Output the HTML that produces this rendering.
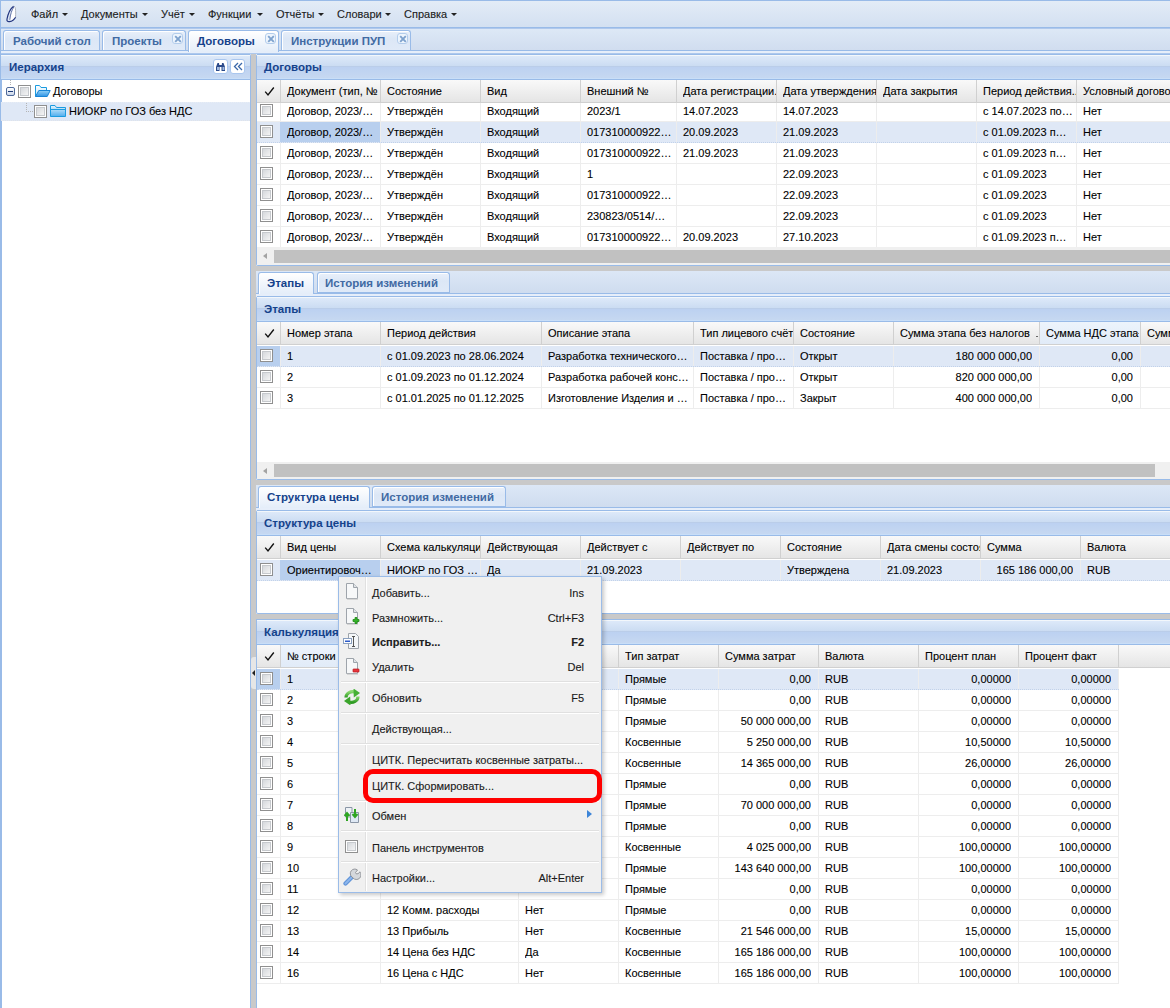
<!DOCTYPE html><html><head><meta charset="utf-8"><style>
*{margin:0;padding:0;box-sizing:border-box}
html,body{width:1170px;height:1008px;overflow:hidden;background:#fff}
body{position:relative;font-family:"Liberation Sans", sans-serif;font-size:11px;color:#000}
.t{position:absolute;white-space:nowrap;line-height:13px}
.ph{position:absolute;background:linear-gradient(to bottom,#f3f7fb 0px,#f3f7fb 1px,#dde9f9 1px,#cbdcf2 11px,#bacde9 11px,#bacde9 12px,#bcd1f1 12px,#c6d8f1 23px,#c8def8 23px,#c8def8 24px);border-bottom:1px solid #99bbe8;border-top:1px solid #99bbe8}
.pht{position:absolute;font-weight:bold;color:#15428b;font-size:11.5px;line-height:13px}
.gh{position:absolute;background:linear-gradient(to bottom,#f9f9f9,#e5e5e5);border-bottom:1px solid #d0d0d0;height:23px}
.hc{position:absolute;top:0;height:22px;border-right:1px solid #d0d0d0}
.hct{position:absolute;top:5px;left:6px;right:0;line-height:13px;white-space:nowrap;overflow:hidden}
.row{position:absolute;height:21px;border-bottom:1px solid #ededed;background:#fff}
.sel{background:#dfe8f6;border-bottom:1px dotted #c2d2ea}
.cell{position:absolute;top:0;height:20px;border-right:1px solid #ededed}
.ct{position:absolute;top:4px;left:7px;right:1px;line-height:13px;white-space:nowrap;overflow:hidden}
.r{text-align:right;right:7px}
.cb{position:absolute;left:3px;top:3px;width:13px;height:13px;border:1px solid #8f8f8f;background:#fff}
.cb::after{content:"";box-sizing:border-box;position:absolute;left:1px;top:1px;width:9px;height:9px;border:1px solid #c6c9cd;background:linear-gradient(135deg,#d5d8dc,#f4f4f4)}
.tab{position:absolute;border:1px solid #99bbe8;border-bottom:none;border-radius:3px 3px 0 0;background:linear-gradient(to bottom,#e9f0fa,#dce7f6 40%,#e0eaf8);box-shadow:inset 1px 1px 0 #fff}
.tabt{position:absolute;font-weight:bold;font-size:11.5px;line-height:13px;color:#416aa3;white-space:nowrap}
.act .tabt{color:#15428b}
.act{background:linear-gradient(to bottom,#ffffff,#e4edf9)}
.tclose{position:absolute;width:11px;height:11px;border:1px solid #b3cdec;border-radius:3px;background:#eef5fd}
.mi{position:absolute;left:0;width:263px;height:25px}
.mt{position:absolute;left:34px;top:6px;line-height:13px;color:#222;white-space:nowrap}
.ct,.hct,.t{-webkit-text-stroke:0.2px rgba(0,0,0,0.5)}
.ms{position:absolute;right:18px;top:6px;line-height:13px;color:#222;white-space:nowrap}
</style></head><body>
<div style="position:absolute;left:0px;top:0px;width:1170px;height:28px;background:linear-gradient(to bottom,#e3ecf7,#d3e0f1);border-top:1px solid #99bbe8;border-bottom:1px solid #99bbe8"></div>
<div style="position:absolute;left:0px;top:28px;width:1170px;height:1px;background:#afc8ec"></div>
<div class="t" style="left:31px;top:8px;color:#1f1f1f">Файл</div>
<div class="t" style="left:81px;top:8px;color:#1f1f1f">Документы</div>
<div class="t" style="left:161px;top:8px;color:#1f1f1f">Учёт</div>
<div class="t" style="left:208px;top:8px;color:#1f1f1f">Функции</div>
<div class="t" style="left:276px;top:8px;color:#1f1f1f">Отчёты</div>
<div class="t" style="left:337px;top:8px;color:#1f1f1f">Словари</div>
<div class="t" style="left:404px;top:8px;color:#1f1f1f">Справка</div>
<div style="position:absolute;left:62px;top:13px;width:0;height:0;border-left:3px solid transparent;border-right:3px solid transparent;border-top:3px solid #222"></div>
<div style="position:absolute;left:142px;top:13px;width:0;height:0;border-left:3px solid transparent;border-right:3px solid transparent;border-top:3px solid #222"></div>
<div style="position:absolute;left:189px;top:13px;width:0;height:0;border-left:3px solid transparent;border-right:3px solid transparent;border-top:3px solid #222"></div>
<div style="position:absolute;left:257px;top:13px;width:0;height:0;border-left:3px solid transparent;border-right:3px solid transparent;border-top:3px solid #222"></div>
<div style="position:absolute;left:318px;top:13px;width:0;height:0;border-left:3px solid transparent;border-right:3px solid transparent;border-top:3px solid #222"></div>
<div style="position:absolute;left:385px;top:13px;width:0;height:0;border-left:3px solid transparent;border-right:3px solid transparent;border-top:3px solid #222"></div>
<div style="position:absolute;left:451px;top:13px;width:0;height:0;border-left:3px solid transparent;border-right:3px solid transparent;border-top:3px solid #222"></div>
<svg style="position:absolute;left:0px;top:2px" width="24" height="24" viewBox="0 0 24 24"><path d="M14 4 L15.6 5 L15.6 15 L12 18.5 L9.6 17.8 L10.4 11 Z" fill="#fff"/><path d="M14 4.2 C15.5 4.8 15.8 7 15.6 15.2" fill="none" stroke="#a6abb8" stroke-width="0.9"/><path d="M13.6 4.2 C10.5 6.5 8 12 7 17 C6.6 19 7.5 19.8 9.5 19.6 C12 19.3 14.2 17.8 15.6 15.2" fill="none" stroke="#23357f" stroke-width="1.2"/><path d="M14 4.6 C12 7.5 10.2 12.5 9.8 17.8" fill="none" stroke="#5b6ea6" stroke-width="1"/></svg>
<div style="position:absolute;left:0px;top:29px;width:1170px;height:25px;background:linear-gradient(to bottom,#dde8f6,#cedbee)"></div>
<div style="position:absolute;left:0px;top:50px;width:1170px;height:1px;background:#99bbe8"></div>
<div style="position:absolute;left:0px;top:51px;width:1170px;height:3px;background:#e6eefa"></div>
<div style="position:absolute;left:0px;top:53px;width:1170px;height:1px;background:#adc8ed"></div>
<div class="tab" style="left:3px;top:30px;width:97px;height:20px"></div>
<div class="tabt" style="left:13px;top:35px;">Рабочий стол</div>
<div class="tab" style="left:102px;top:30px;width:84px;height:20px"></div>
<div class="tabt" style="left:112px;top:35px;">Проекты</div>
<div class="tclose" style="left:172px;top:33px"></div>
<svg style="position:absolute;left:174px;top:35px" width="8" height="8" viewBox="0 0 8 8"><path d="M1.2 1.2 L6.8 6.8 M6.8 1.2 L1.2 6.8" stroke="#7ea2cd" stroke-width="1.9"/></svg>
<div class="tab act" style="left:188px;top:30px;width:91px;height:22px"></div>
<div class="tabt" style="left:197px;top:35px;color:#15428b">Договоры</div>
<div class="tclose" style="left:265px;top:33px"></div>
<svg style="position:absolute;left:267px;top:35px" width="8" height="8" viewBox="0 0 8 8"><path d="M1.2 1.2 L6.8 6.8 M6.8 1.2 L1.2 6.8" stroke="#7ea2cd" stroke-width="1.9"/></svg>
<div class="tab" style="left:281px;top:30px;width:130px;height:20px"></div>
<div class="tabt" style="left:291px;top:35px;">Инструкции ПУП</div>
<div class="tclose" style="left:397px;top:33px"></div>
<svg style="position:absolute;left:399px;top:35px" width="8" height="8" viewBox="0 0 8 8"><path d="M1.2 1.2 L6.8 6.8 M6.8 1.2 L1.2 6.8" stroke="#7ea2cd" stroke-width="1.9"/></svg>
<div style="position:absolute;left:0px;top:0px;width:1px;height:1008px;background:#99bbe8"></div>
<div style="position:absolute;left:1px;top:54px;width:250px;height:954px;background:#fff;border-left:1px solid #99bbe8;border-right:1px solid #99bbe8;border-top:1px solid #99bbe8;border-radius:2px 2px 0 0"></div>
<div class="ph" style="left:1px;top:54px;width:249px;height:26px"></div>
<div class="pht" style="left:9px;top:61px">Иерархия</div>
<div style="position:absolute;left:213px;top:59px;width:15px;height:15px;background:#fff;border:1px solid #a9c6ee;border-radius:3px"></div>
<div style="position:absolute;left:230px;top:59px;width:15px;height:15px;background:#fff;border:1px solid #a9c6ee;border-radius:3px"></div>
<svg style="position:absolute;left:215px;top:62px" width="11" height="10" viewBox="0 0 11 10"><path d="M1 9 L1 5 L2.5 1 L4 1 L4.5 5 L4.5 9 Z M6.5 9 L6.5 5 L7 1 L8.5 1 L10 5 L10 9 Z" fill="#2b4a8a"/><rect x="2" y="5" width="2" height="3" fill="#9fb9e0"/><rect x="7.5" y="5" width="2" height="3" fill="#9fb9e0"/><rect x="4" y="3" width="3" height="2" fill="#2b4a8a"/></svg>
<svg style="position:absolute;left:233px;top:62px" width="10" height="9" viewBox="0 0 10 9"><path d="M5 1 L1.5 4.5 L5 8 M9 1 L5.5 4.5 L9 8" fill="none" stroke="#3a67a8" stroke-width="1.3"/></svg>
<div style="position:absolute;left:10px;top:80px;width:1px;height:5px;border-left:1px dotted #b4b4b4"></div>
<div style="position:absolute;left:6px;top:87px;width:9px;height:9px;border:1px solid #4f6a9a;border-radius:2px;background:linear-gradient(#ffffff,#c9d6ea)"></div>
<div style="position:absolute;left:8px;top:91px;width:5px;height:1px;background:#1c3a78"></div>
<div class="cb" style="left:18px;top:85px"></div>
<svg style="position:absolute;left:34px;top:84px" width="17" height="14" viewBox="0 0 17 14"><defs><linearGradient id="fo1" x1="0" y1="0" x2="0" y2="1"><stop offset="0" stop-color="#ffffff"/><stop offset="1" stop-color="#bfe3fa"/></linearGradient><linearGradient id="fo2" x1="0" y1="0" x2="0" y2="1"><stop offset="0" stop-color="#8fd0f7"/><stop offset="1" stop-color="#2f93e4"/></linearGradient></defs><path d="M1.5 12.5 L1.5 1.5 L5.5 1.5 L7 3.5 L12.5 3.5 L12.5 6.5" fill="url(#fo1)" stroke="#1a9be0" stroke-width="1"/><path d="M1.5 12.5 L4.8 6.5 L16.2 6.5 L13.2 12.5 Z" fill="url(#fo2)" stroke="#1784d6" stroke-width="1" stroke-linejoin="round"/></svg>
<div class="t" style="left:53px;top:85px;">Договоры</div>
<div style="position:absolute;left:1px;top:102px;width:249px;height:19px;background:#dfe8f6;border-top:1px dotted #e6ecf5;border-bottom:1px dotted #dfe3ea"></div>
<div style="position:absolute;left:26px;top:103px;width:1px;height:9px;border-left:1px dotted #b4b4b4"></div>
<div style="position:absolute;left:26px;top:111px;width:7px;height:1px;border-top:1px dotted #b4b4b4"></div>
<div class="cb" style="left:34px;top:105px"></div>
<svg style="position:absolute;left:50px;top:104px" width="16" height="14" viewBox="0 0 16 14"><defs><linearGradient id="fc1" x1="0" y1="0" x2="0" y2="1"><stop offset="0" stop-color="#e6f5fd"/><stop offset="1" stop-color="#4fadee"/></linearGradient></defs><path d="M0.5 12.5 L0.5 1.5 L5 1.5 L6.5 3.5 L15.5 3.5 L15.5 12.5 Z" fill="url(#fc1)" stroke="#1a9be0" stroke-width="1" stroke-linejoin="round"/><path d="M1 5.5 L15 5.5" stroke="#1a9be0" stroke-width="1"/></svg>
<div class="t" style="left:69px;top:105px;">НИОКР по ГОЗ без НДС</div>
<div style="position:absolute;left:251px;top:54px;width:5px;height:954px;background:#c9c9c9"></div>
<div style="position:absolute;left:256px;top:54px;width:914px;height:212px;background:#fff;border-left:1px solid #99bbe8;border-bottom:1px solid #99bbe8;border-radius:2px 0 0 2px"></div>
<div style="position:absolute;left:256px;top:296px;width:914px;height:184px;background:#fff;border-left:1px solid #99bbe8;border-bottom:1px solid #99bbe8;border-radius:2px 0 0 2px"></div>
<div style="position:absolute;left:256px;top:510px;width:914px;height:104px;background:#fff;border-left:1px solid #99bbe8;border-bottom:1px solid #99bbe8;border-radius:2px 0 0 2px"></div>
<div style="position:absolute;left:256px;top:619px;width:914px;height:389px;background:#fff;border-left:1px solid #99bbe8"></div>
<div class="ph" style="left:257px;top:54px;width:913px;height:26px"></div>
<div class="pht" style="left:264px;top:61px">Договоры</div>
<div class="row" style="left:257px;top:101px;width:913px">
<div class="cell" style="left:0;width:24px;"><div class="cb"></div></div>
<div class="cell" style="left:23px;width:101px;"><div class="ct">Договор, 2023/…</div></div>
<div class="cell" style="left:123px;width:101px;"><div class="ct">Утверждён</div></div>
<div class="cell" style="left:223px;width:101px;"><div class="ct">Входящий</div></div>
<div class="cell" style="left:323px;width:97px;"><div class="ct">2023/1</div></div>
<div class="cell" style="left:419px;width:101px;"><div class="ct">14.07.2023</div></div>
<div class="cell" style="left:519px;width:101px;"><div class="ct">14.07.2023</div></div>
<div class="cell" style="left:619px;width:101px;"><div class="ct"></div></div>
<div class="cell" style="left:719px;width:101px;"><div class="ct">с 14.07.2023 по…</div></div>
<div class="cell" style="left:819px;width:101px;"><div class="ct">Нет</div></div>
</div>
<div class="row sel" style="left:257px;top:122px;width:913px">
<div class="cell" style="left:0;width:24px;"><div class="cb"></div></div>
<div class="cell" style="left:23px;width:101px;background:#b8cfee;"><div class="ct">Договор, 2023/…</div></div>
<div class="cell" style="left:123px;width:101px;"><div class="ct">Утверждён</div></div>
<div class="cell" style="left:223px;width:101px;"><div class="ct">Входящий</div></div>
<div class="cell" style="left:323px;width:97px;"><div class="ct">017310000922…</div></div>
<div class="cell" style="left:419px;width:101px;"><div class="ct">20.09.2023</div></div>
<div class="cell" style="left:519px;width:101px;"><div class="ct">21.09.2023</div></div>
<div class="cell" style="left:619px;width:101px;"><div class="ct"></div></div>
<div class="cell" style="left:719px;width:101px;"><div class="ct">с 01.09.2023 п…</div></div>
<div class="cell" style="left:819px;width:101px;"><div class="ct">Нет</div></div>
</div>
<div class="row" style="left:257px;top:143px;width:913px">
<div class="cell" style="left:0;width:24px;"><div class="cb"></div></div>
<div class="cell" style="left:23px;width:101px;"><div class="ct">Договор, 2023/…</div></div>
<div class="cell" style="left:123px;width:101px;"><div class="ct">Утверждён</div></div>
<div class="cell" style="left:223px;width:101px;"><div class="ct">Входящий</div></div>
<div class="cell" style="left:323px;width:97px;"><div class="ct">017310000922…</div></div>
<div class="cell" style="left:419px;width:101px;"><div class="ct">21.09.2023</div></div>
<div class="cell" style="left:519px;width:101px;"><div class="ct">21.09.2023</div></div>
<div class="cell" style="left:619px;width:101px;"><div class="ct"></div></div>
<div class="cell" style="left:719px;width:101px;"><div class="ct">с 01.09.2023 п…</div></div>
<div class="cell" style="left:819px;width:101px;"><div class="ct">Нет</div></div>
</div>
<div class="row" style="left:257px;top:164px;width:913px">
<div class="cell" style="left:0;width:24px;"><div class="cb"></div></div>
<div class="cell" style="left:23px;width:101px;"><div class="ct">Договор, 2023/…</div></div>
<div class="cell" style="left:123px;width:101px;"><div class="ct">Утверждён</div></div>
<div class="cell" style="left:223px;width:101px;"><div class="ct">Входящий</div></div>
<div class="cell" style="left:323px;width:97px;"><div class="ct">1</div></div>
<div class="cell" style="left:419px;width:101px;"><div class="ct"></div></div>
<div class="cell" style="left:519px;width:101px;"><div class="ct">22.09.2023</div></div>
<div class="cell" style="left:619px;width:101px;"><div class="ct"></div></div>
<div class="cell" style="left:719px;width:101px;"><div class="ct">с 01.09.2023</div></div>
<div class="cell" style="left:819px;width:101px;"><div class="ct">Нет</div></div>
</div>
<div class="row" style="left:257px;top:185px;width:913px">
<div class="cell" style="left:0;width:24px;"><div class="cb"></div></div>
<div class="cell" style="left:23px;width:101px;"><div class="ct">Договор, 2023/…</div></div>
<div class="cell" style="left:123px;width:101px;"><div class="ct">Утверждён</div></div>
<div class="cell" style="left:223px;width:101px;"><div class="ct">Входящий</div></div>
<div class="cell" style="left:323px;width:97px;"><div class="ct">017310000922…</div></div>
<div class="cell" style="left:419px;width:101px;"><div class="ct"></div></div>
<div class="cell" style="left:519px;width:101px;"><div class="ct">22.09.2023</div></div>
<div class="cell" style="left:619px;width:101px;"><div class="ct"></div></div>
<div class="cell" style="left:719px;width:101px;"><div class="ct">с 01.09.2023</div></div>
<div class="cell" style="left:819px;width:101px;"><div class="ct">Нет</div></div>
</div>
<div class="row" style="left:257px;top:206px;width:913px">
<div class="cell" style="left:0;width:24px;"><div class="cb"></div></div>
<div class="cell" style="left:23px;width:101px;"><div class="ct">Договор, 2023/…</div></div>
<div class="cell" style="left:123px;width:101px;"><div class="ct">Утверждён</div></div>
<div class="cell" style="left:223px;width:101px;"><div class="ct">Входящий</div></div>
<div class="cell" style="left:323px;width:97px;"><div class="ct">230823/0514/…</div></div>
<div class="cell" style="left:419px;width:101px;"><div class="ct"></div></div>
<div class="cell" style="left:519px;width:101px;"><div class="ct">22.09.2023</div></div>
<div class="cell" style="left:619px;width:101px;"><div class="ct"></div></div>
<div class="cell" style="left:719px;width:101px;"><div class="ct">с 01.09.2023</div></div>
<div class="cell" style="left:819px;width:101px;"><div class="ct">Нет</div></div>
</div>
<div class="row" style="left:257px;top:227px;width:913px">
<div class="cell" style="left:0;width:24px;"><div class="cb"></div></div>
<div class="cell" style="left:23px;width:101px;"><div class="ct">Договор, 2023/…</div></div>
<div class="cell" style="left:123px;width:101px;"><div class="ct">Утверждён</div></div>
<div class="cell" style="left:223px;width:101px;"><div class="ct">Входящий</div></div>
<div class="cell" style="left:323px;width:97px;"><div class="ct">017310000922…</div></div>
<div class="cell" style="left:419px;width:101px;"><div class="ct">20.09.2023</div></div>
<div class="cell" style="left:519px;width:101px;"><div class="ct">27.10.2023</div></div>
<div class="cell" style="left:619px;width:101px;"><div class="ct"></div></div>
<div class="cell" style="left:719px;width:101px;"><div class="ct">с 01.09.2023 п…</div></div>
<div class="cell" style="left:819px;width:101px;"><div class="ct">Нет</div></div>
</div>
<div class="gh" style="left:257px;top:80px;width:913px"></div>
<div class="hc" style="left:257px;top:80px;width:24px"></div>
<svg style="position:absolute;left:264px;top:86px" width="11" height="11" viewBox="0 0 11 11"><path d="M1.2 5.6 L4 9 L9.8 1.5" fill="none" stroke="#111" stroke-width="1.35"/></svg>
<div class="hc" style="left:281px;top:80px;width:100px;"><div class="hct">Документ (тип, №</div></div>
<div class="hc" style="left:381px;top:80px;width:100px;"><div class="hct">Состояние</div></div>
<div class="hc" style="left:481px;top:80px;width:100px;"><div class="hct">Вид</div></div>
<div class="hc" style="left:581px;top:80px;width:96px;"><div class="hct">Внешний №</div></div>
<div class="hc" style="left:677px;top:80px;width:100px;"><div class="hct">Дата регистрации.</div></div>
<div class="hc" style="left:777px;top:80px;width:100px;"><div class="hct">Дата утверждения</div></div>
<div class="hc" style="left:877px;top:80px;width:100px;"><div class="hct">Дата закрытия</div></div>
<div class="hc" style="left:977px;top:80px;width:100px;"><div class="hct">Период действия..</div></div>
<div class="hc" style="left:1077px;top:80px;width:100px;"><div class="hct">Условный договор</div></div>
<div style="position:absolute;left:257px;top:247px;width:913px;height:18px;background:#f0f0f0"></div>
<div style="position:absolute;left:274px;top:250px;width:896px;height:13px;background:#c1c1c1"></div>
<div style="position:absolute;left:263px;top:253px;width:0;height:0;border-top:3.5px solid transparent;border-bottom:3.5px solid transparent;border-right:4px solid #a3a3a3"></div>
<div style="position:absolute;left:256px;top:266px;width:914px;height:5px;background:#c9c9c9"></div>
<div style="position:absolute;left:256px;top:271px;width:914px;height:25px;background:linear-gradient(to bottom,#dce7f6,#cddbee)"></div>
<div style="position:absolute;left:256px;top:293px;width:914px;height:1px;background:#99bbe8"></div>
<div style="position:absolute;left:256px;top:294px;width:914px;height:2px;background:#e6eefa"></div>
<div class="tab act" style="left:258px;top:272px;width:56px;height:22px"></div>
<div class="tabt" style="left:267px;top:277px;color:#15428b">Этапы</div>
<div class="tab" style="left:317px;top:272px;width:133px;height:21px"></div>
<div style="position:absolute;left:317px;top:292px;width:133px;height:1px;background:#99bbe8"></div>
<div class="tabt" style="left:325px;top:277px;">История изменений</div>
<div class="ph" style="left:257px;top:296px;width:913px;height:26px"></div>
<div class="pht" style="left:264px;top:303px">Этапы</div>
<div class="row sel" style="left:257px;top:346px;width:913px">
<div class="cell" style="left:0;width:24px;background:#b8cfee;"><div class="cb"></div></div>
<div class="cell" style="left:23px;width:101px;"><div class="ct">1</div></div>
<div class="cell" style="left:123px;width:162px;"><div class="ct">с 01.09.2023 по 28.06.2024</div></div>
<div class="cell" style="left:284px;width:153px;"><div class="ct">Разработка технического…</div></div>
<div class="cell" style="left:436px;width:101px;"><div class="ct">Поставка / про…</div></div>
<div class="cell" style="left:536px;width:101px;"><div class="ct">Открыт</div></div>
<div class="cell" style="left:636px;width:147px;"><div class="ct r">180 000 000,00</div></div>
<div class="cell" style="left:782px;width:102px;"><div class="ct r">0,00</div></div>
<div class="cell" style="left:883px;width:101px;"><div class="ct"></div></div>
</div>
<div class="row" style="left:257px;top:367px;width:913px">
<div class="cell" style="left:0;width:24px;"><div class="cb"></div></div>
<div class="cell" style="left:23px;width:101px;"><div class="ct">2</div></div>
<div class="cell" style="left:123px;width:162px;"><div class="ct">с 01.09.2023 по 01.12.2024</div></div>
<div class="cell" style="left:284px;width:153px;"><div class="ct">Разработка рабочей конс…</div></div>
<div class="cell" style="left:436px;width:101px;"><div class="ct">Поставка / про…</div></div>
<div class="cell" style="left:536px;width:101px;"><div class="ct">Открыт</div></div>
<div class="cell" style="left:636px;width:147px;"><div class="ct r">820 000 000,00</div></div>
<div class="cell" style="left:782px;width:102px;"><div class="ct r">0,00</div></div>
<div class="cell" style="left:883px;width:101px;"><div class="ct"></div></div>
</div>
<div class="row" style="left:257px;top:388px;width:913px">
<div class="cell" style="left:0;width:24px;"><div class="cb"></div></div>
<div class="cell" style="left:23px;width:101px;"><div class="ct">3</div></div>
<div class="cell" style="left:123px;width:162px;"><div class="ct">с 01.01.2025 по 01.12.2025</div></div>
<div class="cell" style="left:284px;width:153px;"><div class="ct">Изготовление Изделия и …</div></div>
<div class="cell" style="left:436px;width:101px;"><div class="ct">Поставка / про…</div></div>
<div class="cell" style="left:536px;width:101px;"><div class="ct">Закрыт</div></div>
<div class="cell" style="left:636px;width:147px;"><div class="ct r">400 000 000,00</div></div>
<div class="cell" style="left:782px;width:102px;"><div class="ct r">0,00</div></div>
<div class="cell" style="left:883px;width:101px;"><div class="ct"></div></div>
</div>
<div class="gh" style="left:257px;top:322px;width:913px"></div>
<div class="hc" style="left:257px;top:322px;width:24px"></div>
<svg style="position:absolute;left:264px;top:328px" width="11" height="11" viewBox="0 0 11 11"><path d="M1.2 5.6 L4 9 L9.8 1.5" fill="none" stroke="#111" stroke-width="1.35"/></svg>
<div class="hc" style="left:281px;top:322px;width:100px;"><div class="hct">Номер этапа</div></div>
<div class="hc" style="left:381px;top:322px;width:161px;"><div class="hct">Период действия</div></div>
<div class="hc" style="left:542px;top:322px;width:152px;"><div class="hct">Описание этапа</div></div>
<div class="hc" style="left:694px;top:322px;width:100px;"><div class="hct">Тип лицевого счёт</div></div>
<div class="hc" style="left:794px;top:322px;width:100px;"><div class="hct">Состояние</div></div>
<div class="hc" style="left:894px;top:322px;width:146px;"><div class="hct">Сумма этапа без налогов</div></div>
<div class="hc" style="left:1040px;top:322px;width:101px;background:linear-gradient(to bottom,#edf4fc,#e1ebf8);"><div class="hct">Сумма НДС этапа</div></div>
<div class="hc" style="left:1141px;top:322px;width:100px;"><div class="hct">Сумма</div></div>
<div style="position:absolute;left:1036px;top:336px;width:2px;height:1px;background:#666"></div>
<div style="position:absolute;left:1137px;top:333px;width:2px;height:1px;background:#888"></div>
<div style="position:absolute;left:257px;top:462px;width:913px;height:17px;background:#f0f0f0"></div>
<div style="position:absolute;left:274px;top:464px;width:881px;height:13px;background:#c1c1c1"></div>
<div style="position:absolute;left:263px;top:468px;width:0;height:0;border-top:3.5px solid transparent;border-bottom:3.5px solid transparent;border-right:4px solid #a3a3a3"></div>
<div style="position:absolute;left:256px;top:480px;width:914px;height:5px;background:#c9c9c9"></div>
<div style="position:absolute;left:256px;top:485px;width:914px;height:25px;background:linear-gradient(to bottom,#dce7f6,#cddbee)"></div>
<div style="position:absolute;left:256px;top:507px;width:914px;height:1px;background:#99bbe8"></div>
<div style="position:absolute;left:256px;top:508px;width:914px;height:2px;background:#e6eefa"></div>
<div class="tab act" style="left:258px;top:486px;width:112px;height:22px"></div>
<div class="tabt" style="left:267px;top:491px;color:#15428b">Структура цены</div>
<div class="tab" style="left:372px;top:486px;width:134px;height:21px"></div>
<div style="position:absolute;left:372px;top:506px;width:134px;height:1px;background:#99bbe8"></div>
<div class="tabt" style="left:381px;top:491px;">История изменений</div>
<div class="ph" style="left:257px;top:510px;width:913px;height:26px"></div>
<div class="pht" style="left:264px;top:517px">Структура цены</div>
<div class="row sel" style="left:257px;top:560px;width:913px">
<div class="cell" style="left:0;width:24px;"><div class="cb"></div></div>
<div class="cell" style="left:23px;width:101px;background:#b8cfee;"><div class="ct">Ориентировоч…</div></div>
<div class="cell" style="left:123px;width:101px;"><div class="ct">НИОКР по ГОЗ …</div></div>
<div class="cell" style="left:223px;width:101px;"><div class="ct">Да</div></div>
<div class="cell" style="left:323px;width:101px;"><div class="ct">21.09.2023</div></div>
<div class="cell" style="left:423px;width:101px;"><div class="ct"></div></div>
<div class="cell" style="left:523px;width:101px;"><div class="ct">Утверждена</div></div>
<div class="cell" style="left:623px;width:101px;"><div class="ct">21.09.2023</div></div>
<div class="cell" style="left:723px;width:101px;"><div class="ct r">165 186 000,00</div></div>
<div class="cell" style="left:823px;width:101px;"><div class="ct">RUB</div></div>
</div>
<div class="gh" style="left:257px;top:536px;width:913px"></div>
<div class="hc" style="left:257px;top:536px;width:24px"></div>
<svg style="position:absolute;left:264px;top:542px" width="11" height="11" viewBox="0 0 11 11"><path d="M1.2 5.6 L4 9 L9.8 1.5" fill="none" stroke="#111" stroke-width="1.35"/></svg>
<div class="hc" style="left:281px;top:536px;width:100px;"><div class="hct">Вид цены</div></div>
<div class="hc" style="left:381px;top:536px;width:100px;"><div class="hct">Схема калькуляци</div></div>
<div class="hc" style="left:481px;top:536px;width:100px;"><div class="hct">Действующая</div></div>
<div class="hc" style="left:581px;top:536px;width:100px;"><div class="hct">Действует с</div></div>
<div class="hc" style="left:681px;top:536px;width:100px;"><div class="hct">Действует по</div></div>
<div class="hc" style="left:781px;top:536px;width:100px;"><div class="hct">Состояние</div></div>
<div class="hc" style="left:881px;top:536px;width:100px;"><div class="hct">Дата смены состоя</div></div>
<div class="hc" style="left:981px;top:536px;width:100px;"><div class="hct">Сумма</div></div>
<div class="hc" style="left:1081px;top:536px;width:100px;"><div class="hct">Валюта</div></div>
<div style="position:absolute;left:256px;top:614px;width:914px;height:5px;background:#c9c9c9"></div>
<div class="ph" style="left:257px;top:619px;width:913px;height:26px"></div>
<div class="pht" style="left:264px;top:626px">Калькуляция</div>
<div class="row sel" style="left:257px;top:669px;width:862px">
<div class="cell" style="left:0;width:24px;background:#b8cfee;"><div class="cb"></div></div>
<div class="cell" style="left:23px;width:101px;"><div class="ct">1</div></div>
<div class="cell" style="left:123px;width:139px;"><div class="ct"></div></div>
<div class="cell" style="left:261px;width:101px;"><div class="ct"></div></div>
<div class="cell" style="left:361px;width:101px;"><div class="ct">Прямые</div></div>
<div class="cell" style="left:461px;width:101px;"><div class="ct r">0,00</div></div>
<div class="cell" style="left:561px;width:101px;"><div class="ct">RUB</div></div>
<div class="cell" style="left:661px;width:101px;"><div class="ct r">0,00000</div></div>
<div class="cell" style="left:761px;width:101px;"><div class="ct r">0,00000</div></div>
</div>
<div class="row" style="left:257px;top:690px;width:862px">
<div class="cell" style="left:0;width:24px;"><div class="cb"></div></div>
<div class="cell" style="left:23px;width:101px;"><div class="ct">2</div></div>
<div class="cell" style="left:123px;width:139px;"><div class="ct"></div></div>
<div class="cell" style="left:261px;width:101px;"><div class="ct"></div></div>
<div class="cell" style="left:361px;width:101px;"><div class="ct">Прямые</div></div>
<div class="cell" style="left:461px;width:101px;"><div class="ct r">0,00</div></div>
<div class="cell" style="left:561px;width:101px;"><div class="ct">RUB</div></div>
<div class="cell" style="left:661px;width:101px;"><div class="ct r">0,00000</div></div>
<div class="cell" style="left:761px;width:101px;"><div class="ct r">0,00000</div></div>
</div>
<div class="row" style="left:257px;top:711px;width:862px">
<div class="cell" style="left:0;width:24px;"><div class="cb"></div></div>
<div class="cell" style="left:23px;width:101px;"><div class="ct">3</div></div>
<div class="cell" style="left:123px;width:139px;"><div class="ct"></div></div>
<div class="cell" style="left:261px;width:101px;"><div class="ct"></div></div>
<div class="cell" style="left:361px;width:101px;"><div class="ct">Прямые</div></div>
<div class="cell" style="left:461px;width:101px;"><div class="ct r">50 000 000,00</div></div>
<div class="cell" style="left:561px;width:101px;"><div class="ct">RUB</div></div>
<div class="cell" style="left:661px;width:101px;"><div class="ct r">0,00000</div></div>
<div class="cell" style="left:761px;width:101px;"><div class="ct r">0,00000</div></div>
</div>
<div class="row" style="left:257px;top:732px;width:862px">
<div class="cell" style="left:0;width:24px;"><div class="cb"></div></div>
<div class="cell" style="left:23px;width:101px;"><div class="ct">4</div></div>
<div class="cell" style="left:123px;width:139px;"><div class="ct"></div></div>
<div class="cell" style="left:261px;width:101px;"><div class="ct"></div></div>
<div class="cell" style="left:361px;width:101px;"><div class="ct">Косвенные</div></div>
<div class="cell" style="left:461px;width:101px;"><div class="ct r">5 250 000,00</div></div>
<div class="cell" style="left:561px;width:101px;"><div class="ct">RUB</div></div>
<div class="cell" style="left:661px;width:101px;"><div class="ct r">10,50000</div></div>
<div class="cell" style="left:761px;width:101px;"><div class="ct r">10,50000</div></div>
</div>
<div class="row" style="left:257px;top:753px;width:862px">
<div class="cell" style="left:0;width:24px;"><div class="cb"></div></div>
<div class="cell" style="left:23px;width:101px;"><div class="ct">5</div></div>
<div class="cell" style="left:123px;width:139px;"><div class="ct"></div></div>
<div class="cell" style="left:261px;width:101px;"><div class="ct"></div></div>
<div class="cell" style="left:361px;width:101px;"><div class="ct">Косвенные</div></div>
<div class="cell" style="left:461px;width:101px;"><div class="ct r">14 365 000,00</div></div>
<div class="cell" style="left:561px;width:101px;"><div class="ct">RUB</div></div>
<div class="cell" style="left:661px;width:101px;"><div class="ct r">26,00000</div></div>
<div class="cell" style="left:761px;width:101px;"><div class="ct r">26,00000</div></div>
</div>
<div class="row" style="left:257px;top:774px;width:862px">
<div class="cell" style="left:0;width:24px;"><div class="cb"></div></div>
<div class="cell" style="left:23px;width:101px;"><div class="ct">6</div></div>
<div class="cell" style="left:123px;width:139px;"><div class="ct"></div></div>
<div class="cell" style="left:261px;width:101px;"><div class="ct"></div></div>
<div class="cell" style="left:361px;width:101px;"><div class="ct">Прямые</div></div>
<div class="cell" style="left:461px;width:101px;"><div class="ct r">0,00</div></div>
<div class="cell" style="left:561px;width:101px;"><div class="ct">RUB</div></div>
<div class="cell" style="left:661px;width:101px;"><div class="ct r">0,00000</div></div>
<div class="cell" style="left:761px;width:101px;"><div class="ct r">0,00000</div></div>
</div>
<div class="row" style="left:257px;top:795px;width:862px">
<div class="cell" style="left:0;width:24px;"><div class="cb"></div></div>
<div class="cell" style="left:23px;width:101px;"><div class="ct">7</div></div>
<div class="cell" style="left:123px;width:139px;"><div class="ct"></div></div>
<div class="cell" style="left:261px;width:101px;"><div class="ct"></div></div>
<div class="cell" style="left:361px;width:101px;"><div class="ct">Прямые</div></div>
<div class="cell" style="left:461px;width:101px;"><div class="ct r">70 000 000,00</div></div>
<div class="cell" style="left:561px;width:101px;"><div class="ct">RUB</div></div>
<div class="cell" style="left:661px;width:101px;"><div class="ct r">0,00000</div></div>
<div class="cell" style="left:761px;width:101px;"><div class="ct r">0,00000</div></div>
</div>
<div class="row" style="left:257px;top:816px;width:862px">
<div class="cell" style="left:0;width:24px;"><div class="cb"></div></div>
<div class="cell" style="left:23px;width:101px;"><div class="ct">8</div></div>
<div class="cell" style="left:123px;width:139px;"><div class="ct"></div></div>
<div class="cell" style="left:261px;width:101px;"><div class="ct"></div></div>
<div class="cell" style="left:361px;width:101px;"><div class="ct">Прямые</div></div>
<div class="cell" style="left:461px;width:101px;"><div class="ct r">0,00</div></div>
<div class="cell" style="left:561px;width:101px;"><div class="ct">RUB</div></div>
<div class="cell" style="left:661px;width:101px;"><div class="ct r">0,00000</div></div>
<div class="cell" style="left:761px;width:101px;"><div class="ct r">0,00000</div></div>
</div>
<div class="row" style="left:257px;top:837px;width:862px">
<div class="cell" style="left:0;width:24px;"><div class="cb"></div></div>
<div class="cell" style="left:23px;width:101px;"><div class="ct">9</div></div>
<div class="cell" style="left:123px;width:139px;"><div class="ct"></div></div>
<div class="cell" style="left:261px;width:101px;"><div class="ct"></div></div>
<div class="cell" style="left:361px;width:101px;"><div class="ct">Косвенные</div></div>
<div class="cell" style="left:461px;width:101px;"><div class="ct r">4 025 000,00</div></div>
<div class="cell" style="left:561px;width:101px;"><div class="ct">RUB</div></div>
<div class="cell" style="left:661px;width:101px;"><div class="ct r">100,00000</div></div>
<div class="cell" style="left:761px;width:101px;"><div class="ct r">100,00000</div></div>
</div>
<div class="row" style="left:257px;top:858px;width:862px">
<div class="cell" style="left:0;width:24px;"><div class="cb"></div></div>
<div class="cell" style="left:23px;width:101px;"><div class="ct">10</div></div>
<div class="cell" style="left:123px;width:139px;"><div class="ct"></div></div>
<div class="cell" style="left:261px;width:101px;"><div class="ct"></div></div>
<div class="cell" style="left:361px;width:101px;"><div class="ct">Прямые</div></div>
<div class="cell" style="left:461px;width:101px;"><div class="ct r">143 640 000,00</div></div>
<div class="cell" style="left:561px;width:101px;"><div class="ct">RUB</div></div>
<div class="cell" style="left:661px;width:101px;"><div class="ct r">100,00000</div></div>
<div class="cell" style="left:761px;width:101px;"><div class="ct r">100,00000</div></div>
</div>
<div class="row" style="left:257px;top:879px;width:862px">
<div class="cell" style="left:0;width:24px;"><div class="cb"></div></div>
<div class="cell" style="left:23px;width:101px;"><div class="ct">11</div></div>
<div class="cell" style="left:123px;width:139px;"><div class="ct"></div></div>
<div class="cell" style="left:261px;width:101px;"><div class="ct"></div></div>
<div class="cell" style="left:361px;width:101px;"><div class="ct">Прямые</div></div>
<div class="cell" style="left:461px;width:101px;"><div class="ct r">0,00</div></div>
<div class="cell" style="left:561px;width:101px;"><div class="ct">RUB</div></div>
<div class="cell" style="left:661px;width:101px;"><div class="ct r">0,00000</div></div>
<div class="cell" style="left:761px;width:101px;"><div class="ct r">0,00000</div></div>
</div>
<div class="row" style="left:257px;top:900px;width:862px">
<div class="cell" style="left:0;width:24px;"><div class="cb"></div></div>
<div class="cell" style="left:23px;width:101px;"><div class="ct">12</div></div>
<div class="cell" style="left:123px;width:139px;"><div class="ct">12 Комм. расходы</div></div>
<div class="cell" style="left:261px;width:101px;"><div class="ct">Нет</div></div>
<div class="cell" style="left:361px;width:101px;"><div class="ct">Прямые</div></div>
<div class="cell" style="left:461px;width:101px;"><div class="ct r">0,00</div></div>
<div class="cell" style="left:561px;width:101px;"><div class="ct">RUB</div></div>
<div class="cell" style="left:661px;width:101px;"><div class="ct r">0,00000</div></div>
<div class="cell" style="left:761px;width:101px;"><div class="ct r">0,00000</div></div>
</div>
<div class="row" style="left:257px;top:921px;width:862px">
<div class="cell" style="left:0;width:24px;"><div class="cb"></div></div>
<div class="cell" style="left:23px;width:101px;"><div class="ct">13</div></div>
<div class="cell" style="left:123px;width:139px;"><div class="ct">13 Прибыль</div></div>
<div class="cell" style="left:261px;width:101px;"><div class="ct">Нет</div></div>
<div class="cell" style="left:361px;width:101px;"><div class="ct">Косвенные</div></div>
<div class="cell" style="left:461px;width:101px;"><div class="ct r">21 546 000,00</div></div>
<div class="cell" style="left:561px;width:101px;"><div class="ct">RUB</div></div>
<div class="cell" style="left:661px;width:101px;"><div class="ct r">15,00000</div></div>
<div class="cell" style="left:761px;width:101px;"><div class="ct r">15,00000</div></div>
</div>
<div class="row" style="left:257px;top:942px;width:862px">
<div class="cell" style="left:0;width:24px;"><div class="cb"></div></div>
<div class="cell" style="left:23px;width:101px;"><div class="ct">14</div></div>
<div class="cell" style="left:123px;width:139px;"><div class="ct">14 Цена без НДС</div></div>
<div class="cell" style="left:261px;width:101px;"><div class="ct">Да</div></div>
<div class="cell" style="left:361px;width:101px;"><div class="ct">Косвенные</div></div>
<div class="cell" style="left:461px;width:101px;"><div class="ct r">165 186 000,00</div></div>
<div class="cell" style="left:561px;width:101px;"><div class="ct">RUB</div></div>
<div class="cell" style="left:661px;width:101px;"><div class="ct r">100,00000</div></div>
<div class="cell" style="left:761px;width:101px;"><div class="ct r">100,00000</div></div>
</div>
<div class="row" style="left:257px;top:963px;width:862px">
<div class="cell" style="left:0;width:24px;"><div class="cb"></div></div>
<div class="cell" style="left:23px;width:101px;"><div class="ct">16</div></div>
<div class="cell" style="left:123px;width:139px;"><div class="ct">16 Цена с НДС</div></div>
<div class="cell" style="left:261px;width:101px;"><div class="ct">Нет</div></div>
<div class="cell" style="left:361px;width:101px;"><div class="ct">Косвенные</div></div>
<div class="cell" style="left:461px;width:101px;"><div class="ct r">165 186 000,00</div></div>
<div class="cell" style="left:561px;width:101px;"><div class="ct">RUB</div></div>
<div class="cell" style="left:661px;width:101px;"><div class="ct r">100,00000</div></div>
<div class="cell" style="left:761px;width:101px;"><div class="ct r">100,00000</div></div>
</div>
<div class="gh" style="left:257px;top:645px;width:913px"></div>
<div class="hc" style="left:257px;top:645px;width:24px"></div>
<svg style="position:absolute;left:264px;top:651px" width="11" height="11" viewBox="0 0 11 11"><path d="M1.2 5.6 L4 9 L9.8 1.5" fill="none" stroke="#111" stroke-width="1.35"/></svg>
<div class="hc" style="left:281px;top:645px;width:100px;background:linear-gradient(to bottom,#edf4fc,#e1ebf8);"><div class="hct">№ строки</div></div>
<div class="hc" style="left:381px;top:645px;width:138px;"><div class="hct">Наименование</div></div>
<div class="hc" style="left:519px;top:645px;width:100px;"><div class="hct">Прямая</div></div>
<div class="hc" style="left:619px;top:645px;width:100px;"><div class="hct">Тип затрат</div></div>
<div class="hc" style="left:719px;top:645px;width:100px;"><div class="hct">Сумма затрат</div></div>
<div class="hc" style="left:819px;top:645px;width:100px;"><div class="hct">Валюта</div></div>
<div class="hc" style="left:919px;top:645px;width:100px;"><div class="hct">Процент план</div></div>
<div class="hc" style="left:1019px;top:645px;width:100px;"><div class="hct">Процент факт</div></div>
<div style="position:absolute;left:251px;top:657px;width:5px;height:32px;background:#e6e6e6;border-radius:3px 0 0 3px"></div>
<div style="position:absolute;left:252px;top:670px;width:0;height:0;border-top:3px solid transparent;border-bottom:3px solid transparent;border-right:3px solid #222"></div>
<div style="position:absolute;left:338px;top:576px;width:264px;height:317px;background:#f0f0f0;border:1px solid #9bbce8;box-shadow:2px 2px 4px rgba(0,0,0,0.22)"></div>
<div style="position:absolute;left:365px;top:577px;width:1px;height:104px;background:#e0e0e0"></div>
<div style="position:absolute;left:366px;top:577px;width:1px;height:104px;background:#fff"></div>
<div style="position:absolute;left:365px;top:683px;width:1px;height:29px;background:#e0e0e0"></div>
<div style="position:absolute;left:366px;top:683px;width:1px;height:29px;background:#fff"></div>
<div style="position:absolute;left:365px;top:714px;width:1px;height:29px;background:#e0e0e0"></div>
<div style="position:absolute;left:366px;top:714px;width:1px;height:29px;background:#fff"></div>
<div style="position:absolute;left:365px;top:745px;width:1px;height:55px;background:#e0e0e0"></div>
<div style="position:absolute;left:366px;top:745px;width:1px;height:55px;background:#fff"></div>
<div style="position:absolute;left:365px;top:802px;width:1px;height:28px;background:#e0e0e0"></div>
<div style="position:absolute;left:366px;top:802px;width:1px;height:28px;background:#fff"></div>
<div style="position:absolute;left:365px;top:832px;width:1px;height:29px;background:#e0e0e0"></div>
<div style="position:absolute;left:366px;top:832px;width:1px;height:29px;background:#fff"></div>
<div style="position:absolute;left:365px;top:863px;width:1px;height:28px;background:#e0e0e0"></div>
<div style="position:absolute;left:366px;top:863px;width:1px;height:28px;background:#fff"></div>
<div style="position:absolute;left:341px;top:681px;width:258px;height:1px;background:#e0e0e0"></div>
<div style="position:absolute;left:341px;top:682px;width:258px;height:1px;background:#fff"></div>
<div style="position:absolute;left:341px;top:712px;width:258px;height:1px;background:#e0e0e0"></div>
<div style="position:absolute;left:341px;top:713px;width:258px;height:1px;background:#fff"></div>
<div style="position:absolute;left:341px;top:743px;width:258px;height:1px;background:#e0e0e0"></div>
<div style="position:absolute;left:341px;top:744px;width:258px;height:1px;background:#fff"></div>
<div style="position:absolute;left:341px;top:800px;width:258px;height:1px;background:#e0e0e0"></div>
<div style="position:absolute;left:341px;top:801px;width:258px;height:1px;background:#fff"></div>
<div style="position:absolute;left:341px;top:830px;width:258px;height:1px;background:#e0e0e0"></div>
<div style="position:absolute;left:341px;top:831px;width:258px;height:1px;background:#fff"></div>
<div style="position:absolute;left:341px;top:861px;width:258px;height:1px;background:#e0e0e0"></div>
<div style="position:absolute;left:341px;top:862px;width:258px;height:1px;background:#fff"></div>
<div class="t" style="left:372px;top:587px;color:#222;">Добавить...</div>
<div class="t" style="left:484px;width:100px;text-align:right;top:587px;color:#222;">Ins</div>
<div class="t" style="left:372px;top:612px;color:#222;">Размножить...</div>
<div class="t" style="left:484px;width:100px;text-align:right;top:612px;color:#222;">Ctrl+F3</div>
<div class="t" style="left:372px;top:636px;color:#222;font-weight:bold;">Исправить...</div>
<div class="t" style="left:484px;width:100px;text-align:right;top:636px;color:#222;font-weight:bold;">F2</div>
<div class="t" style="left:372px;top:661px;color:#222;">Удалить</div>
<div class="t" style="left:484px;width:100px;text-align:right;top:661px;color:#222;">Del</div>
<div class="t" style="left:372px;top:692px;color:#222;">Обновить</div>
<div class="t" style="left:484px;width:100px;text-align:right;top:692px;color:#222;">F5</div>
<div class="t" style="left:372px;top:723px;color:#222;">Действующая...</div>
<div class="t" style="left:372px;top:754px;color:#222;">ЦИТК. Пересчитать косвенные затраты...</div>
<div class="t" style="left:372px;top:780px;color:#222;">ЦИТК. Сформировать...</div>
<div class="t" style="left:372px;top:810px;color:#222;">Обмен</div>
<div class="t" style="left:372px;top:842px;color:#222;">Панель инструментов</div>
<div class="t" style="left:372px;top:872px;color:#222;">Настройки...</div>
<div class="t" style="left:484px;width:100px;text-align:right;top:872px;color:#222;">Alt+Enter</div>
<svg style="position:absolute;left:344px;top:583px" width="16" height="17" viewBox="0 0 16 17"><path d="M2.5 0.5 L9.5 0.5 L13.5 4.5 L13.5 15.5 L2.5 15.5 Z" fill="#f7f8f9" stroke="#9ea4ab" stroke-width="1"/><path d="M9.5 0.5 L9.5 4.5 L13.5 4.5" fill="#dfe3e7" stroke="#9ea4ab" stroke-width="1"/><path d="M3 16.2 L14 16.2" stroke="#c8c8c8" stroke-width="1"/></svg>
<svg style="position:absolute;left:344px;top:608px" width="16" height="17" viewBox="0 0 16 17"><path d="M2.5 0.5 L9.5 0.5 L13.5 4.5 L13.5 15.5 L2.5 15.5 Z" fill="#f7f8f9" stroke="#9ea4ab" stroke-width="1"/><path d="M9.5 0.5 L9.5 4.5 L13.5 4.5" fill="#dfe3e7" stroke="#9ea4ab" stroke-width="1"/><path d="M3 16.2 L14 16.2" stroke="#c8c8c8" stroke-width="1"/><path d="M11 9.5 L13 9.5 L13 11.5 L15 11.5 L15 13.5 L13 13.5 L13 15.5 L11 15.5 L11 13.5 L9 13.5 L9 11.5 L11 11.5 Z" fill="#35b528" stroke="#1f8a17" stroke-width="0.8"/></svg>
<svg style="position:absolute;left:343px;top:633px" width="18" height="17" viewBox="0 0 18 17"><path d="M5.5 0.5 L12.5 0.5 L15.5 3.5 L15.5 15.5 L5.5 15.5 Z" fill="#f4f7f9" stroke="#9ea4ab" stroke-width="1"/><rect x="0.5" y="5.5" width="8" height="5" fill="#fff" stroke="#8aa0c0" stroke-width="1"/><rect x="2" y="7.5" width="5" height="1.5" fill="#2a59c8"/><path d="M9 3.5 L12 3.5 M10.5 3.5 L10.5 13.5 M9 13.5 L12 13.5" stroke="#444" stroke-width="0.9" fill="none"/></svg>
<svg style="position:absolute;left:344px;top:658px" width="16" height="17" viewBox="0 0 16 17"><path d="M2.5 0.5 L9.5 0.5 L13.5 4.5 L13.5 15.5 L2.5 15.5 Z" fill="#f7f8f9" stroke="#9ea4ab" stroke-width="1"/><path d="M9.5 0.5 L9.5 4.5 L13.5 4.5" fill="#dfe3e7" stroke="#9ea4ab" stroke-width="1"/><path d="M3 16.2 L14 16.2" stroke="#c8c8c8" stroke-width="1"/><rect x="9" y="11" width="6" height="3" rx="0.5" fill="#e8363c" stroke="#b5141a" stroke-width="0.7"/></svg>
<svg style="position:absolute;left:343px;top:689px" width="18" height="16" viewBox="0 0 18 16"><defs><linearGradient id="rg" x1="0" y1="0" x2="0" y2="1"><stop offset="0" stop-color="#8ad96f"/><stop offset="1" stop-color="#2d9a22"/></linearGradient></defs><path d="M3 8.5 C3 4 8 1.8 12 3" stroke="url(#rg)" stroke-width="3.2" fill="none"/><path d="M10.5 -0.5 L17 4 L10.8 8.5 Z" fill="#45b034"/><path d="M15 7.5 C15 12 10 14.2 6 13" stroke="url(#rg)" stroke-width="3.2" fill="none"/><path d="M7.5 16.5 L1 12 L7.2 7.5 Z" fill="#3aa52b"/></svg>
<svg style="position:absolute;left:344px;top:807px" width="16" height="16" viewBox="0 0 16 16"><path d="M1.5 0.5 L8 0.5 L8 10 L1.5 10 Z" fill="#eef2f6" stroke="#8a96a6" stroke-width="1"/><path d="M6.5 5.5 L14.5 5.5 L14.5 15.5 L6.5 15.5 Z" fill="#dfe9f5" stroke="#8a96a6" stroke-width="1"/><path d="M3 14 L3 7 M0.5 9 L3 6 L5.5 9" stroke="#2fa523" stroke-width="2" fill="none"/><path d="M11 2 L11 9 M8.5 7 L11 10 L13.5 7" stroke="#2fa523" stroke-width="2" fill="none"/></svg>
<div class="cb" style="left:345px;top:840px"></div>
<svg style="position:absolute;left:343px;top:868px" width="18" height="18" viewBox="0 0 18 18"><path d="M2.5 15.5 L10 8" stroke="#5f93d8" stroke-width="4.2" stroke-linecap="round"/><path d="M2.5 15.5 L10 8" stroke="#8cb6ec" stroke-width="2" stroke-linecap="round"/><path d="M9 9 A4.3 4.3 0 0 1 14.5 2 L12.5 4.5 L13.5 6 L15.5 5.5 L16.8 3.8 A4.3 4.3 0 0 1 10 10 Z" fill="#d5d8dc" stroke="#8b8f94" stroke-width="0.9"/></svg>
<div style="position:absolute;left:587px;top:810px;width:0;height:0;border-top:4.5px solid transparent;border-bottom:4.5px solid transparent;border-left:5px solid #3d85d8"></div>
<div style="position:absolute;left:363px;top:769px;width:239px;height:34px;border:5px solid #ff0000;border-radius:10px"></div>
</body></html>
